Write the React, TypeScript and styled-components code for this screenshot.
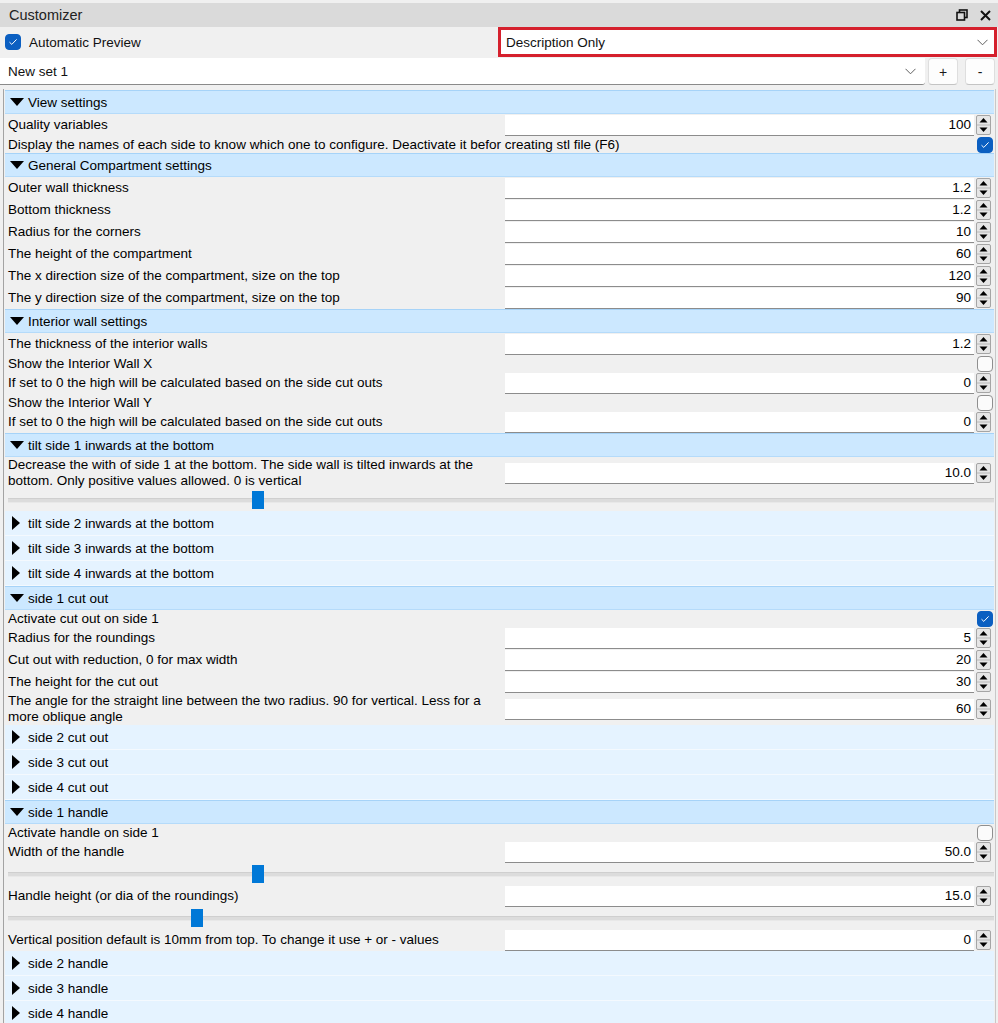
import React from "react";
import styled, { createGlobalStyle, css } from "styled-components";

const GlobalStyle = createGlobalStyle`
  html, body {
    margin: 0;
    padding: 0;
    background: #f0f0f0;
  }
  body {
    font-family: "Liberation Sans", Arial, sans-serif;
    font-size: 13.5px;
    color: #000;
  }
`;

type Param =
  | { kind: "spin"; label: string; value: string; tall?: boolean }
  | { kind: "check"; label: string; checked: boolean }
  | { kind: "slider"; pos: number };

type Group = { title: string; open: boolean; params?: Param[] };

const groups: Group[] = [
  {
    title: "View settings",
    open: true,
    params: [
      { kind: "spin", label: "Quality variables", value: "100" },
      {
        kind: "check",
        label:
          "Display the names of each side to know which one to configure. Deactivate it befor creating stl file (F6)",
        checked: true,
      },
    ],
  },
  {
    title: "General Compartment settings",
    open: true,
    params: [
      { kind: "spin", label: "Outer wall thickness", value: "1.2" },
      { kind: "spin", label: "Bottom thickness", value: "1.2" },
      { kind: "spin", label: "Radius for the corners", value: "10" },
      { kind: "spin", label: "The height of the compartment", value: "60" },
      { kind: "spin", label: "The x direction size of the compartment, size on the top", value: "120" },
      { kind: "spin", label: "The y direction size of the compartment, size on the top", value: "90" },
    ],
  },
  {
    title: "Interior wall settings",
    open: true,
    params: [
      { kind: "spin", label: "The thickness of the interior walls", value: "1.2" },
      { kind: "check", label: "Show the Interior Wall X", checked: false },
      { kind: "spin", label: "If set to 0 the high will be calculated based on the side cut outs", value: "0" },
      { kind: "check", label: "Show the Interior Wall Y", checked: false },
      { kind: "spin", label: "If set to 0 the high will be calculated based on the side cut outs", value: "0" },
    ],
  },
  {
    title: "tilt side 1 inwards at the bottom",
    open: true,
    params: [
      {
        kind: "spin",
        label:
          "Decrease the with of side 1 at the bottom. The side wall is tilted inwards at the bottom. Only positive values allowed. 0 is vertical",
        value: "10.0",
        tall: true,
      },
      { kind: "slider", pos: 0.25 },
    ],
  },
  { title: "tilt side 2 inwards at the bottom", open: false },
  { title: "tilt side 3 inwards at the bottom", open: false },
  { title: "tilt side 4 inwards at the bottom", open: false },
  {
    title: "side 1 cut out",
    open: true,
    params: [
      { kind: "check", label: "Activate cut out on side 1", checked: true },
      { kind: "spin", label: "Radius for the roundings", value: "5" },
      { kind: "spin", label: "Cut out with reduction, 0 for max width", value: "20" },
      { kind: "spin", label: "The height for the cut out", value: "30" },
      {
        kind: "spin",
        label:
          "The angle for the straight line between the two radius. 90 for vertical. Less for a more oblique angle",
        value: "60",
        tall: true,
      },
    ],
  },
  { title: "side 2 cut out", open: false },
  { title: "side 3 cut out", open: false },
  { title: "side 4 cut out", open: false },
  {
    title: "side 1 handle",
    open: true,
    params: [
      { kind: "check", label: "Activate handle on side 1", checked: false },
      { kind: "spin", label: "Width of the handle", value: "50.0" },
      { kind: "slider", pos: 0.25 },
      { kind: "spin", label: "Handle height (or dia of the roundings)", value: "15.0" },
      { kind: "slider", pos: 0.188 },
      {
        kind: "spin",
        label: "Vertical position default is 10mm from top. To change it use + or - values",
        value: "0",
      },
    ],
  },
  { title: "side 2 handle", open: false },
  { title: "side 3 handle", open: false },
  { title: "side 4 handle", open: false },
];

const Window = styled.div`
  width: 998px;
  height: 1023px;
  overflow: hidden;
  display: flex;
  flex-direction: column;
  background: #f0f0f0;

  & > * {
    flex-shrink: 0;
  }
`;

const TitleBar = styled.div`
  margin-top: 3px;
  height: 24px;
  background: #dadada;
  display: flex;
  align-items: center;
  padding: 0 7px 0 9px;
  font-size: 14.5px;
  color: #222;
`;

const TitleText = styled.span`
  flex: 1;
`;

const TitleIcons = styled.div`
  display: flex;
  align-items: center;
  gap: 12px;
`;

const PreviewRow = styled.div`
  display: grid;
  grid-template-columns: 498px 1fr;
  height: 30px;
  align-items: stretch;
`;

const PreviewToggle = styled.label`
  display: flex;
  align-items: center;
  gap: 8px;
  padding-left: 5px;
  color: #111;
`;

const HighlightSelect = styled.div`
  display: flex;
  align-items: center;
  justify-content: space-between;
  background: #fff;
  border: 3px solid #d5202d;
  padding: 0 6px 0 5px;
  margin-right: 1px;
  color: #111;
`;

const PresetRow = styled.div`
  display: flex;
  align-items: stretch;
  height: 27px;
  margin-top: 1px;
  padding-right: 3px;
`;

const PresetCombo = styled.div`
  flex: 0 0 925px;
  margin-right: 3px;
  display: flex;
  align-items: center;
  justify-content: space-between;
  background: #fff;
  border-bottom: 1px solid #8a8a8a;
  border-radius: 0 0 3px 0;
  padding: 0 9px 0 8px;
  box-sizing: border-box;
  color: #111;
`;

const SmallButton = styled.button`
  width: 30px;
  padding: 0;
  margin-left: 7px;
  background: #fdfdfd;
  border: 1px solid #dedede;
  border-bottom-color: #c4c4c4;
  border-radius: 4px;
  font-family: inherit;
  font-size: 14px;
  color: #1a1a1a;

  &:first-of-type {
    margin-left: 0;
  }
`;

const ParamList = styled.div`
  margin: 4px 2px 0 3px;
  padding-top: 1px;
  border-left: 1px solid #a3a3a3;
  border-right: 1px solid #c8c8c8;
  display: flex;
  flex-direction: column;
`;

const GroupHeader = styled.div<{ $open: boolean }>`
  display: flex;
  align-items: center;
  margin: 0 1px;
  padding-left: 5px;
  box-sizing: border-box;
  color: #000;
  ${(p) =>
    p.$open
      ? css`
          height: 24px;
          background: #cce8ff;
          border-top: 1px solid #a6d3f8;
          border-bottom: 1px solid #b5dbfa;
        `
      : css`
          height: 25px;
          background: #e5f3ff;
          border-bottom: 1px solid #f4f9fe;
        `}
`;

const CaretBox = styled.span`
  width: 18px;
  display: flex;
  align-items: center;
`;

const Caret = styled.span<{ $open: boolean }>`
  width: 0;
  height: 0;
  ${(p) =>
    p.$open
      ? css`
          border-left: 7px solid transparent;
          border-right: 7px solid transparent;
          border-top: 8px solid #000;
        `
      : css`
          margin-left: 2px;
          border-top: 7px solid transparent;
          border-bottom: 7px solid transparent;
          border-left: 8px solid #000;
        `}
`;

const SpinRow = styled.div<{ $tall?: boolean }>`
  display: grid;
  grid-template-columns: 499px 1fr 15px;
  column-gap: 2px;
  align-items: center;
  height: ${(p) => (p.$tall ? 32 : 22)}px;
  padding-right: 4px;
`;

const Label = styled.div`
  padding-left: 4px;
  padding-right: 6px;
  line-height: 16px;
  color: #000;
`;

const ValueField = styled.div`
  height: 21px;
  box-sizing: border-box;
  background: #fff;
  border-bottom: 1px solid #8c8c8c;
  display: flex;
  align-items: center;
  justify-content: flex-end;
  padding-right: 3px;
  color: #000;
`;

const CheckRow = styled.div`
  display: flex;
  align-items: center;
  justify-content: space-between;
  height: 17px;
  padding-right: 2px;
`;

const Box = styled.span<{ $checked: boolean }>`
  width: 16px;
  height: 16px;
  box-sizing: border-box;
  border-radius: 4px;
  display: flex;
  align-items: center;
  justify-content: center;
  flex-shrink: 0;
  ${(p) =>
    p.$checked
      ? css`
          background: #0b5fc1;
          border: 1px solid #0b5fc1;
        `
      : css`
          background: #fbfbfb;
          border: 1px solid #8f8f8f;
        `}
`;

const SliderRow = styled.div`
  height: 22px;
  display: flex;
  align-items: center;
  padding: 0 1px 0 4px;
`;

const Track = styled.div`
  position: relative;
  flex: 1;
  height: 3px;
  background: #dcdcdc;
  border-top: 1px solid #cfcfcf;
  border-bottom: 1px solid #e8e8e8;
`;

const Thumb = styled.span`
  position: absolute;
  top: -8px;
  width: 12px;
  height: 18px;
  background: #0078d7;
`;

function CheckBox({ checked }: { checked: boolean }) {
  return (
    <Box $checked={checked}>
      {checked && (
        <svg width="10" height="8" viewBox="0 0 10 8">
          <path d="M1.5 4.2 L3.8 6.4 L8.6 1.4" fill="none" stroke="#fff" strokeWidth="1" />
        </svg>
      )}
    </Box>
  );
}

function SpinButtons() {
  return (
    <svg width="15" height="20" viewBox="0 0 15 20">
      <rect x="0.5" y="0.5" width="14" height="19" rx="1.5" fill="#e6e6e6" stroke="#a5a5a5" />
      <line x1="1" y1="10" x2="14" y2="10" stroke="#b8b8b8" />
      <path d="M3.5 7.5 L7.5 3 L11.5 7.5 Z" fill="#000" />
      <path d="M3.5 12.5 L7.5 17 L11.5 12.5 Z" fill="#000" />
    </svg>
  );
}

function Chevron() {
  return (
    <svg width="11" height="7" viewBox="0 0 11 7">
      <path d="M0.5 0.8 L5.5 5.8 L10.5 0.8" fill="none" stroke="#606060" strokeWidth="1" />
    </svg>
  );
}

function ParamView({ param }: { param: Param }) {
  if (param.kind === "check") {
    return (
      <CheckRow>
        <Label>{param.label}</Label>
        <CheckBox checked={param.checked} />
      </CheckRow>
    );
  }
  if (param.kind === "slider") {
    return (
      <SliderRow>
        <Track>
          <Thumb style={{ left: `calc((100% - 12px) * ${param.pos})` }} />
        </Track>
      </SliderRow>
    );
  }
  return (
    <SpinRow $tall={param.tall}>
      <Label>{param.label}</Label>
      <ValueField>{param.value}</ValueField>
      <SpinButtons />
    </SpinRow>
  );
}

export default function App() {
  return (
    <Window>
      <GlobalStyle />
      <TitleBar>
        <TitleText>Customizer</TitleText>
        <TitleIcons>
          <svg width="12" height="12" viewBox="0 0 12 12">
            <rect x="3.5" y="1" width="7.5" height="7.5" fill="none" stroke="#111" strokeWidth="1.6" />
            <rect x="1" y="3.5" width="7.5" height="7.5" fill="#dadada" stroke="#111" strokeWidth="1.6" />
          </svg>
          <svg width="11" height="11" viewBox="0 0 11 11">
            <path d="M1 1 L10 10 M10 1 L1 10" stroke="#111" strokeWidth="2" />
          </svg>
        </TitleIcons>
      </TitleBar>

      <PreviewRow>
        <PreviewToggle>
          <CheckBox checked />
          Automatic Preview
        </PreviewToggle>
        <HighlightSelect>
          <span>Description Only</span>
          <Chevron />
        </HighlightSelect>
      </PreviewRow>

      <PresetRow>
        <PresetCombo>
          <span>New set 1</span>
          <Chevron />
        </PresetCombo>
        <SmallButton>+</SmallButton>
        <SmallButton>-</SmallButton>
      </PresetRow>

      <ParamList>
        {groups.map((group, i) => (
          <React.Fragment key={i}>
            <GroupHeader $open={group.open}>
              <CaretBox>
                <Caret $open={group.open} />
              </CaretBox>
              {group.title}
            </GroupHeader>
            {group.open && group.params?.map((p, j) => <ParamView key={j} param={p} />)}
          </React.Fragment>
        ))}
      </ParamList>
    </Window>
  );
}
